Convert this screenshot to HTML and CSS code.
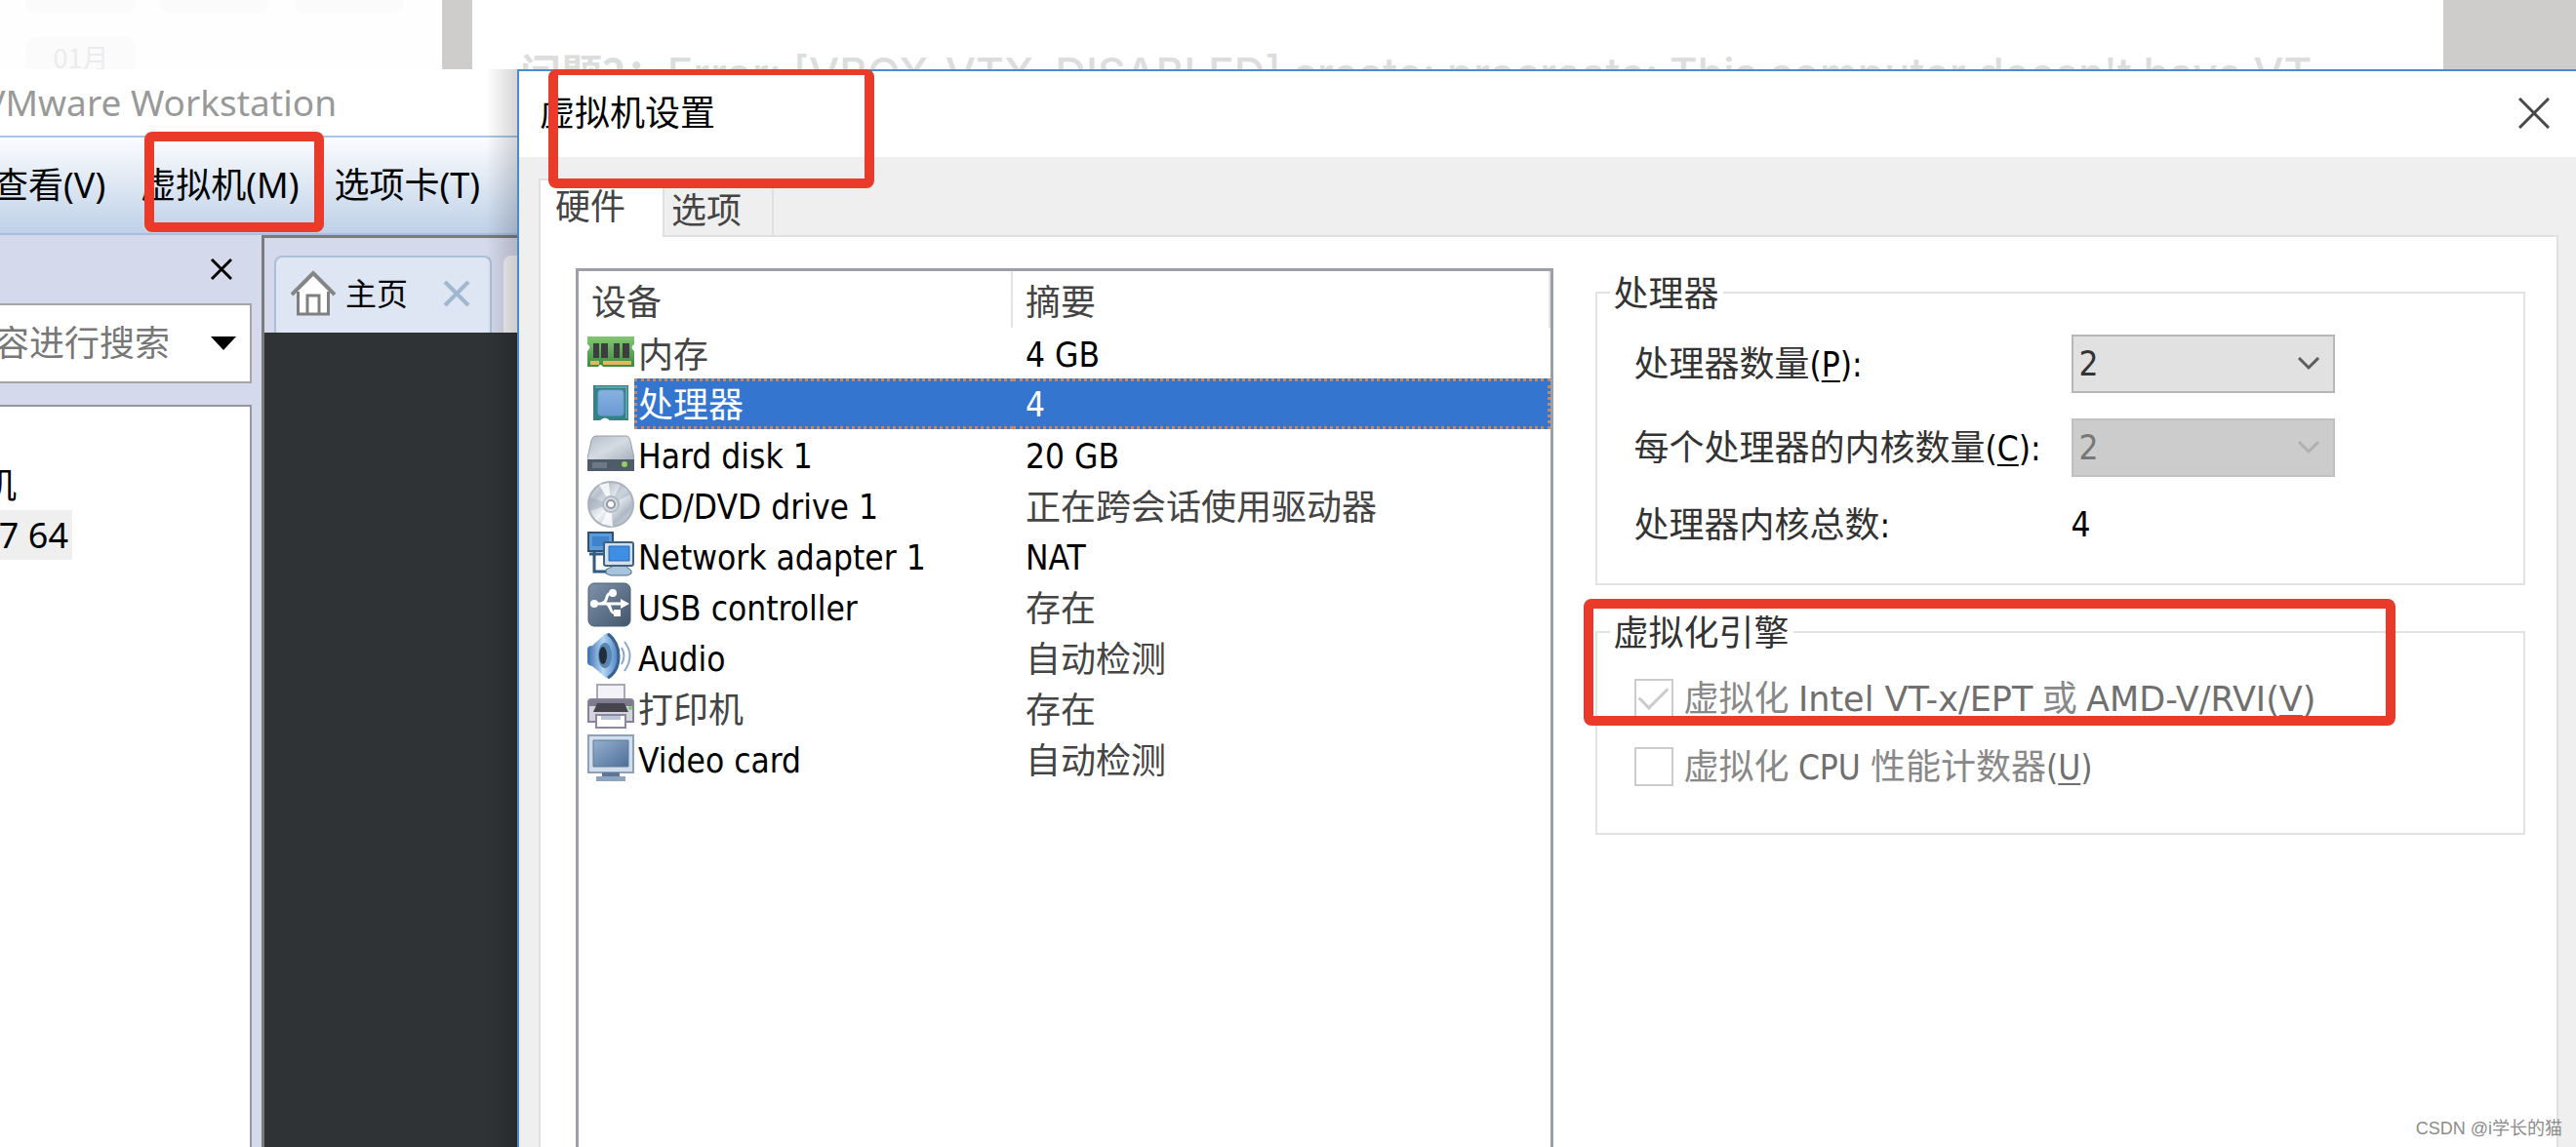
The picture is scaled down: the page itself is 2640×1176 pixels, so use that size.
FILE: index.html
```html
<!DOCTYPE html>
<html lang="zh-CN">
<head>
<meta charset="utf-8">
<title>虚拟机设置</title>
<link rel="stylesheet" href="styles.css">
</head>
<body>
<header class="backdrop">
  <div class="archive">
    <span class="pill pill-cut"></span><span class="pill pill-cut"></span><span class="pill pill-cut"></span>
    <span class="pill">01月</span>
  </div>
  <div class="gutter"></div>
  <p class="article">问题2：<span>Error: [VBOX_VTX_DISABLED] create: procreate: This computer doesn't have VT</span></p>
  <div class="aside"></div>
</header>

<main class="desktop">
  <section class="vmware">
    <h1 class="vm-title">VMware Workstation</h1>
    <nav class="menubar">
      <button type="button">查看(V)</button>
      <button type="button">虚拟机(M)</button>
      <button type="button">选项卡(T)</button>
    </nav>
    <div class="workspace">
      <aside class="library">
        <div class="library-head">
          <button type="button" class="icon-btn" aria-label="关闭库">
            <svg width="24" height="24" viewBox="0 0 24 24"><path d="M2 2L22 22M22 2L2 22" stroke="#000" stroke-width="3" fill="none"/></svg>
          </button>
        </div>
        <div class="search">
          <input type="text" placeholder="容进行搜索" aria-label="搜索">
          <button type="button" class="icon-btn" aria-label="展开">
            <svg width="26" height="14" viewBox="0 0 26 14"><path d="M0 0H26L13 14Z" fill="#000"/></svg>
          </button>
        </div>
        <ul class="tree">
          <li><span>机</span></li>
          <li><span class="current">7 64</span></li>
        </ul>
      </aside>
      <div class="console">
        <div class="tabstrip">
          <div class="home-tab">
            <svg width="46" height="48" viewBox="0 0 46 48"><path d="M7 22V45H39V22L23 6Z" fill="#fff"/><path d="M1 25L23 3L45 25" fill="none" stroke="#858585" stroke-width="4"/><path d="M7.500 22V45H38.500V22M17 45V26H29V45" fill="none" stroke="#808080" stroke-width="3"/></svg>
            <span>主页</span>
            <button type="button" class="icon-btn" aria-label="关闭主页">
              <svg width="28" height="28" viewBox="0 0 28 28"><path d="M2 2L26 26M26 2L2 26" stroke="#9fb8d0" stroke-width="4" fill="none"/></svg>
            </button>
          </div>
          <div class="next-tab"></div>
        </div>
        <div class="screen"></div>
      </div>
    </div>
    <div class="mark mark-menu"></div>
  </section>

  <section class="dialog">
    <div class="dialog-title">
      <h2>虚拟机设置</h2>
      <button type="button" class="icon-btn" aria-label="关闭">
        <svg width="32" height="32" viewBox="0 0 32 32"><path d="M1 1L31 31M31 1L1 31" stroke="#484848" stroke-width="3" fill="none"/></svg>
      </button>
    </div>
    <div class="tabs" role="tablist">
      <button type="button" role="tab" class="tab active" aria-selected="true">硬件</button>
      <button type="button" role="tab" class="tab" aria-selected="false">选项</button>
    </div>
    <div class="panel">
      <div class="devices">
        <table>
          <colgroup><col class="c-icon"><col class="c-name"><col></colgroup>
          <thead><tr><th colspan="2">设备</th><th>摘要</th></tr></thead>
          <tbody>
            <tr>
              <td><svg viewBox="0 0 48 52"><defs><linearGradient id="ram" x2="0" y2="1"><stop offset="0" stop-color="#84c772"/><stop offset="1" stop-color="#3b8a40"/></linearGradient></defs><path d="M0 9H48V17Q43 20 48 24V40H16Q13 36 11 40H0V24Q5 20 0 17Z" fill="url(#ram)"/><path d="M6 16H12V31H6ZM14 16H21V31H14ZM27 16H33V31H27ZM36 16H43V31H36Z" fill="#3d3d40"/><path d="M3 34H12V38H3ZM16 34H45V38H16Z" fill="#e5b75d"/></svg></td>
              <td>内存</td><td class="latin">4 GB</td>
            </tr>
            <tr class="selected">
              <td><svg viewBox="0 0 48 52"><defs><linearGradient id="cpu" x2="0" y2="1"><stop offset="0" stop-color="#88b2e2"/><stop offset="1" stop-color="#6a9ad2"/></linearGradient></defs><path d="M6 7H42V43H23Q18 38 13 43H6Z" fill="#35818a"/><path d="M8 9H40V41" fill="none" stroke="#5aa3a6" stroke-width="2"/><rect x="11" y="12" width="26" height="26" rx="3" fill="url(#cpu)" stroke="#6b9fc8"/></svg></td>
              <td>处理器</td><td class="latin">4</td>
            </tr>
            <tr>
              <td><svg viewBox="0 0 48 52"><defs><linearGradient id="hdd" x2="1" y2="1"><stop offset="0" stop-color="#b3bdc8"/><stop offset=".5" stop-color="#d5dbe2"/><stop offset="1" stop-color="#a4afbb"/></linearGradient></defs><path d="M8 7H40Q43 7 44 12L48 30V32H0V30L4 12Q5 7 8 7Z" fill="url(#hdd)" stroke="#949faa"/><path d="M0 31H48V43H0Z" fill="#4f5b69"/><path d="M5 34H20V40H5Z" fill="#6d7885"/><circle cx="38" cy="36" r="3" fill="#94cf62"/></svg></td>
              <td class="latin">Hard disk 1</td><td class="latin">20 GB</td>
            </tr>
            <tr>
              <td><svg viewBox="0 0 48 52"><defs><linearGradient id="cd" x2="1" y2="1"><stop offset="0" stop-color="#dfe3e8"/><stop offset=".25" stop-color="#b9c2cc"/><stop offset=".5" stop-color="#f2f4f6"/><stop offset=".75" stop-color="#aeb9c5"/><stop offset="1" stop-color="#e2e6ea"/></linearGradient></defs><circle cx="24" cy="25" r="23" fill="url(#cd)" stroke="#a9b2bd" stroke-width="2"/><path d="M24 25L2 18V32ZM24 25L34 4L44 15Z" fill="#8fa0b2" opacity=".4"/><path d="M24 25L12 5L22 3ZM24 25L26 48L14 45Z" fill="#fff" opacity=".8"/><circle cx="24" cy="25" r="8" fill="#d5dae0" stroke="#b1bac4" stroke-width="2"/><circle cx="24" cy="25" r="4" fill="#fff" stroke="#8f9aa6" stroke-width="2"/></svg></td>
              <td class="latin">CD/DVD drive 1</td><td>正在跨会话使用驱动器</td>
            </tr>
            <tr>
              <td><svg viewBox="0 0 48 52"><path d="M1 2H26V21H1Z" fill="#5d9ad8" stroke="#2f526f" stroke-width="2"/><path d="M5 6H22V16H5Z" fill="#3e83cb"/><path d="M7 22V42H20M2 24H16" fill="none" stroke="#2f5c82" stroke-width="3"/><path d="M19 40L27 36H39L45 41V44L41 46H24L19 44Z" fill="#a8c4dc" stroke="#4c6d87"/><rect x="17" y="12" width="30" height="24" rx="2" fill="#d3e1ee" stroke="#42617d" stroke-width="2"/><path d="M22 16H43V31H22Z" fill="#3e8ee4" stroke="#2b68ac"/></svg></td>
              <td class="latin">Network adapter 1</td><td class="latin">NAT</td>
            </tr>
            <tr>
              <td><svg viewBox="0 0 48 52"><defs><linearGradient id="usb" x2="1" y2="1"><stop offset="0" stop-color="#7d93ab"/><stop offset="1" stop-color="#43566c"/></linearGradient></defs><rect x="1" y="2" width="43" height="44" rx="6" fill="url(#usb)" stroke="#4c5e73"/><path d="M6 23H38M14 23Q19 22 20 16Q21 12 26 12M20 23Q23 25 24 29Q25 33 30 33" fill="none" stroke="#fff" stroke-width="3"/><circle cx="7" cy="23" r="4" fill="#fff"/><circle cx="26" cy="12" r="4" fill="#fff"/><path d="M34 18L43 23L34 28ZM27 29H34V36H27Z" fill="#fff"/></svg></td>
              <td class="latin">USB controller</td><td>存在</td>
            </tr>
            <tr>
              <td><svg viewBox="0 0 48 52"><defs><linearGradient id="spk" x2="1" y2="0"><stop offset="0" stop-color="#3b6fae"/><stop offset=".5" stop-color="#b5d6f4"/><stop offset="1" stop-color="#4781c2"/></linearGradient></defs><path d="M0 18Q0 14 5 14L18 2Q21 0 24 2Q32 10 32 25Q32 40 24 47Q21 49 18 46L5 35Q0 34 0 31Z" fill="url(#spk)"/><path d="M21 2Q32 10 32 25Q32 40 21 47" fill="none" stroke="#3c5f8c" stroke-width="3"/><ellipse cx="18" cy="24" rx="7" ry="13" fill="#5a86b4"/><ellipse cx="16" cy="24" rx="4" ry="9" fill="#222d3c"/><path d="M35 16Q40 24 35 33M38 10Q49 24 38 40" fill="none" stroke="#8aa7cf" stroke-width="2"/></svg></td>
              <td class="latin">Audio</td><td>自动检测</td>
            </tr>
            <tr>
              <td><svg viewBox="0 0 48 52"><path d="M10 2H38V20H10Z" fill="#f3f3f7" stroke="#a9a7b8" stroke-width="2"/><path d="M1 20Q1 17 4 17H44Q47 17 47 20V40H1Z" fill="#d5d4de" stroke="#85839a" stroke-width="2"/><path d="M2 18H46V24H2Z" fill="#7f7b8d"/><path d="M10 21H38L42 30H6Z" fill="#47464f"/><circle cx="44" cy="26" r="2" fill="#6fd15e"/><path d="M9 33H39V46H9Z" fill="#fff" stroke="#8b89a0" stroke-width="2"/><path d="M14 34H34V38H14Z" fill="#b9c8d8"/></svg></td>
              <td>打印机</td><td>存在</td>
            </tr>
            <tr>
              <td><svg viewBox="0 0 48 52"><defs><linearGradient id="vga" x2="1" y2="1"><stop offset="0" stop-color="#95b0cf"/><stop offset="1" stop-color="#4d6f98"/></linearGradient></defs><path d="M1 2H47V40H1Z" fill="#d3deea" stroke="#8ba2bf" stroke-width="2"/><path d="M6 7H42V34H6Z" fill="url(#vga)" stroke="#5f7b9c"/><path d="M15 40H33V44H15Z" fill="#5c7698"/><path d="M9 44H39V49H9Z" fill="#8da4bf"/></svg></td>
              <td class="latin">Video card</td><td>自动检测</td>
            </tr>
          </tbody>
        </table>
      </div>
      <div class="settings">
        <fieldset class="cpu">
          <legend>处理器</legend>
          <label for="count">处理器数量<span class="latin">(<u>P</u>):</span></label>
          <span class="combo"><select id="count"><option>2</option></select><svg width="24" height="14" viewBox="0 0 24 14"><path d="M2 1L12 11L22 1" fill="none" stroke="#5c5c5c" stroke-width="3"/></svg></span>
          <label for="cores">每个处理器的内核数量<span class="latin">(<u>C</u>):</span></label>
          <span class="combo"><select id="cores" disabled><option>2</option></select><svg width="24" height="14" viewBox="0 0 24 14"><path d="M2 1L12 11L22 1" fill="none" stroke="#b0b0b0" stroke-width="3"/></svg></span>
          <span>处理器内核总数<span class="latin">:</span></span>
          <output class="latin">4</output>
        </fieldset>
        <fieldset class="virt">
          <legend>虚拟化引擎</legend>
          <label><input type="checkbox" checked disabled><span>虚拟化 <span class="latin wide">Intel VT-x/EPT</span> 或 <span class="latin wide">AMD-V/RVI(<u>V</u>)</span></span></label>
          <label><input type="checkbox" disabled><span>虚拟化 <span class="latin">CPU </span> 性能计数器<span class="latin">(<u>U</u>)</span></span></label>
          <div class="mark mark-virt"></div>
        </fieldset>
      </div>
    </div>
    <div class="mark mark-title"></div>
  </section>
</main>
<div class="watermark">CSDN @i学长的猫</div>
</body>
</html>
```
FILE: styles.css
```css
* { box-sizing: border-box; }
body {
  margin: 0;
  height: 100vh;
  overflow: hidden;
  position: relative;
  display: flex;
  flex-direction: column;
  font-family: "Noto Sans", "Noto Sans CJK SC", sans-serif;
  font-size: 36px;
  line-height: 40px;
  color: #000;
  background: #fff;
}
button, input, select { font: inherit; color: inherit; }
button { border: 0; padding: 0; background: none; }
h1, h2, p, ul { margin: 0; padding: 0; font-weight: 400; font-size: inherit; }
svg { display: block; }
.icon-btn { display: flex; }
.latin { font-family: "DejaVu Sans Condensed", "DejaVu Sans", sans-serif; font-size: 35px; }
.latin.wide { font-family: "DejaVu Sans", sans-serif; }

/* page behind the windows */
.backdrop { flex: none; display: flex; height: 71px; overflow: hidden; }
.archive {
  width: 453px;
  padding-left: 27px;
  display: grid;
  grid-template-columns: repeat(3, 112px);
  grid-template-rows: 13px 56px;
  gap: 25px;
  background: #fefefe;
  color: #ececef;
  font-family: "Noto Sans CJK SC", sans-serif;
  font-size: 27px;
}
.pill { border-radius: 10px; background: #fbfbfb; text-align: center; line-height: 42px; }
.pill-cut { border-radius: 0 0 10px 10px; }
.gutter { width: 31px; background: #cfcccc; }
.article {
  flex: 1;
  padding: 43px 0 0 49px;
  white-space: nowrap;
  overflow: hidden;
  font-family: "Noto Sans CJK SC", sans-serif;
  font-size: 42px;
  line-height: 60px;
  font-weight: 700;
  color: #ddd;
}
.article span { font-family: "Inter", sans-serif; font-size: 44px; font-weight: 500; }
.aside { width: 136px; background: #cfcccc; }

.desktop { flex: 1; min-height: 0; display: flex; }

/* main program window */
.vmware { flex: none; width: 530px; position: relative; display: flex; flex-direction: column; overflow: hidden; }
.vmware::after {
  content: "";
  position: absolute;
  inset: 0 0 0 auto;
  width: 32px;
  background: linear-gradient(to right, rgba(0,0,0,0), rgba(0,0,0,.16));
}
.vm-title {
  width: 345px;
  height: 68px;
  display: flex;
  align-items: center;
  justify-content: flex-end;
  white-space: nowrap;
  font-size: 37px;
  color: #999;
}
.menubar {
  height: 102px;
  display: flex;
  align-items: center;
  gap: 36px;
  margin-left: -7px;
  border-top: 2px solid #a9c4e4;
  border-bottom: 2px solid #a3c0e0;
  background: linear-gradient(#fbfcff, #dde7f3 50%, #bfd0e8);
}
.menubar button { white-space: nowrap; }
.workspace { flex: 1; min-height: 0; display: flex; background: #d4d9eb; }
.library { flex: none; width: 268px; padding-right: 10px; display: flex; flex-direction: column; }
.library-head { height: 70px; display: flex; align-items: center; justify-content: flex-end; padding: 0 19px 0 0; }
.search {
  height: 82px;
  display: flex;
  align-items: center;
  justify-content: space-between;
  padding-right: 14px;
  border: solid #a5a5a8;
  border-width: 2px 2px 2px 0;
  background: #fff;
}
.search input { width: 190px; margin-left: -6px; border: 0; padding: 0; background: none; }
.search input::placeholder { color: #777; }
.tree {
  flex: 1;
  margin-top: 22px;
  padding-top: 55px;
  border: solid #9297a1;
  border-width: 2px 2px 0 0;
  background: #fff;
  list-style: none;
}
.tree li { display: flex; justify-content: flex-end; width: 74px; line-height: 51px; white-space: nowrap; }
.tree li:first-child { width: 17px; }
.tree .current { padding-right: 4px; background: #efefef; }
.console { flex: 1; min-width: 0; display: flex; flex-direction: column; border: solid #7b7b7b; border-width: 3px 0 0 3px; }
.tabstrip { height: 97px; padding: 18px 0 0 10px; display: flex; gap: 12px; overflow: hidden; }
.home-tab {
  flex: none;
  width: 223px;
  display: flex;
  align-items: center;
  gap: 10px;
  padding: 0 20px 4px 15px;
  border: 2px solid #a9c0d8;
  border-bottom: 0;
  border-radius: 8px 8px 0 0;
  background: #dde6f2;
  font-size: 32px;
}
.home-tab .icon-btn { margin-left: auto; }
.next-tab { flex: none; width: 120px; border-radius: 8px 0 0 0; background: #f4f4f4; }
.screen { flex: 1; background: #2f3336; }

/* settings dialog */
.dialog {
  flex: 1;
  min-width: 0;
  position: relative;
  display: flex;
  flex-direction: column;
  border: solid #4a8ad4;
  border-width: 2px 0 0 2px;
  background: #efefef;
}
.dialog-title {
  height: 88px;
  padding: 0 27px 2px 21px;
  display: flex;
  align-items: center;
  justify-content: space-between;
  background: #fff;
}
.tabs { display: flex; align-items: flex-end; padding: 22px 0 0 20px; height: 82px; margin-bottom: -2px; position: relative; }
.tab { color: #444; text-align: left; border: 2px solid #e0e0e0; }
.tab.active { width: 127px; height: 60px; padding: 0 0 4px 15px; background: #fff; border-width: 2px 0 0 2px; }
.tab:not(.active) { width: 114px; height: 55px; padding: 0 0 0 7px; }
.panel {
  flex: 1;
  min-height: 0;
  margin: 0 18px 0 20px;
  padding: 34px 32px 0 36px;
  display: grid;
  grid-template-columns: 1001fr 953fr;
  gap: 43px;
  border: solid #e0e0e0;
  border-width: 0 2px;
  background: linear-gradient(#e0e0e0, #e0e0e0) 127px 0 / 100% 2px no-repeat #fff;
}
.devices { border: 3px solid #9b9fa8; border-bottom: 0; }
table { width: 100%; border-collapse: separate; border-spacing: 0; table-layout: fixed; color: #444; }
.c-icon { width: 57px; }
.c-name { width: 388px; }
th { height: 58px; padding: 5px 0 0 13px; text-align: left; font-weight: 400; border-right: 2px solid #e4e4e4; }
td { height: 52px; padding: 4px 0 0 13px; line-height: 44px; white-space: nowrap; }
td.latin { color: #000; }
td:first-child { padding: 0 0 0 9px; }
td:nth-child(2) { padding-left: 4px; }
td svg { width: 48px; height: 52px; }
.selected td:not(:first-child) { padding-top: 2px; background: #3476cf; color: #fff; border: 3px dotted #c48a68; }
.selected td:nth-child(2) { padding-left: 1px; border-right: 0; }
.selected td:nth-child(3) { border-left: 0; }

.settings { display: flex; flex-direction: column; gap: 27px; padding-top: 4px; }
fieldset { min-width: 0; margin: 0; border: 2px solid #e2e2e2; position: relative; }
legend { margin-left: -25px; padding: 2px 4px 0; color: #333; }
.cpu {
  display: grid;
  grid-template: 60px 60px 46px / 448px 270px;
  row-gap: 26px;
  align-items: center;
  padding: 22px 0 37px 38px;
  color: #333;
}
.cpu .latin { color: #000; }
u { text-decoration-thickness: 2px; text-underline-offset: 4px; }
.combo { display: grid; align-items: center; }
.combo > * { grid-area: 1 / 1; }
.combo svg { justify-self: end; margin-right: 15px; pointer-events: none; }
select {
  appearance: none;
  width: 100%;
  height: 60px;
  padding: 0 6px;
  border: 2px solid #b6b6b6;
  border-radius: 0;
  background: #e1e1e1;
  font-family: "DejaVu Sans Condensed", "DejaVu Sans", sans-serif;
  font-size: 35px;
}
select:disabled { background: #ccc; border-color: #c0c0c0; color: #777; opacity: 1; }
.virt { padding: 27px 0 48px 38px; display: flex; flex-direction: column; gap: 30px; }
.virt label { display: flex; align-items: center; gap: 11px; height: 40px; white-space: nowrap; color: #888; }
.virt .latin { color: #6f6f6f; }
input[type="checkbox"] {
  appearance: none;
  width: 40px;
  height: 40px;
  margin: 0;
  border: 2px solid #ccc;
  background: #fff;
  display: grid;
  place-items: center;
}
input[type="checkbox"]:checked::before {
  content: "";
  width: 26px;
  height: 13px;
  border: solid #ccc;
  border-width: 0 0 3px 3px;
  transform: translateY(-4px) rotate(-45deg);
}

/* hand-drawn highlights */
.mark { position: absolute; z-index: 2; border: 10px solid #ea3b2a; border-radius: 8px; pointer-events: none; }
.mark-menu { left: 148px; top: 64px; width: 184px; height: 103px; }
.mark-title { left: 30px; top: -2px; width: 334px; height: 122px; border-top-width: 6px; }
.mark-virt { left: -14px; top: -55px; width: 832px; height: 130px; }
.watermark {
  position: absolute;
  right: 14px;
  bottom: 5px;
  font-family: "Liberation Sans", "Noto Sans CJK SC", sans-serif;
  font-size: 18px;
  line-height: 28px;
  color: #8c8c8c;
}
```
